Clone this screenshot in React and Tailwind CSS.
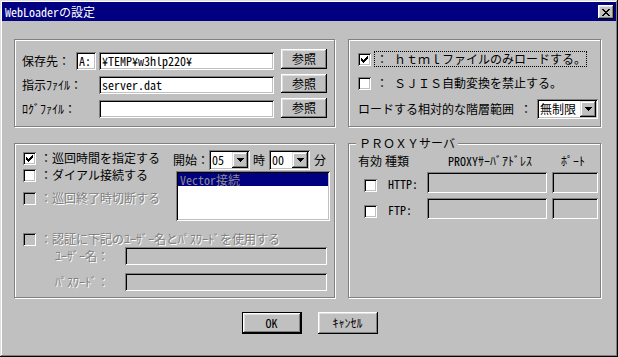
import React from "react";

function CheckMark() {
  return (
    <svg width="7" height="7" viewBox="0 0 7 7" shapeRendering="crispEdges" className="block">
      <path
        fill="#000"
        d="M6 0h1v1h-1z M5 1h2v1h-2z M0 2h1v1h-1z M4 2h3v1h-3z M0 3h2v1h-2z M3 3h3v1h-3z M0 4h5v1h-5z M1 5h3v1h-3z M2 6h1v1h-1z"
      />
    </svg>
  );
}

function Arrow() {
  return (
    <svg width="7" height="4" viewBox="0 0 7 4" shapeRendering="crispEdges" className="block">
      <path fill="#000" d="M0 0h7v1h-7z M1 1h5v1h-5z M2 2h3v1h-3z M3 3h1v1h-1z" />
    </svg>
  );
}

function Check({ checked, disabled, className = "" }) {
  return (
    <div
      className={`w-[13px] h-[13px] shrink-0 p-[3px] ${disabled ? "bg-[#c0c0c0]" : "bg-white"} shadow-[inset_1px_1px_0_#808080,inset_-1px_-1px_0_#ffffff,inset_2px_2px_0_#000000,inset_-2px_-2px_0_#c0c0c0] ${className}`}
    >
      {checked && <CheckMark />}
    </div>
  );
}

function Field({ className = "", disabled, children }) {
  return (
    <div
      className={`shrink-0 flex items-center pl-[3px] whitespace-nowrap overflow-hidden ${disabled ? "bg-[#c0c0c0]" : "bg-white"} shadow-[inset_1px_1px_0_#808080,inset_-1px_-1px_0_#ffffff,inset_2px_2px_0_#000000,inset_-2px_-2px_0_#c0c0c0] ${className}`}
    >
      {children}
    </div>
  );
}

function Btn({ className = "", children }) {
  return (
    <div
      className={`shrink-0 flex items-center justify-center bg-[#c0c0c0] shadow-[inset_-1px_-1px_0_#000000,inset_1px_1px_0_#ffffff,inset_-2px_-2px_0_#808080,inset_2px_2px_0_#dfdfdf] ${className}`}
    >
      {children}
    </div>
  );
}

function Combo({ className = "", children }) {
  return (
    <div
      className={`shrink-0 flex h-[20px] bg-white p-[2px] shadow-[inset_1px_1px_0_#808080,inset_-1px_-1px_0_#ffffff,inset_2px_2px_0_#000000,inset_-2px_-2px_0_#c0c0c0] ${className}`}
    >
      <div className="flex-1 flex items-center pl-[1px] whitespace-nowrap">{children}</div>
      <div className="w-[16px] h-[16px] flex items-center justify-center bg-[#c0c0c0] shadow-[inset_-1px_-1px_0_#000000,inset_1px_1px_0_#dfdfdf,inset_-2px_-2px_0_#808080,inset_2px_2px_0_#ffffff]">
        <Arrow />
      </div>
    </div>
  );
}

function Dis({ className = "", children }) {
  return <span className={`text-[#808080] [text-shadow:1px_1px_0_#ffffff] whitespace-nowrap ${className}`}>{children}</span>;
}

export default function App() {
  return (
    <div className="w-[618px] h-[357px] bg-[#c0c0c0] p-[2px] flex flex-col text-black text-[12px] leading-[12px] font-['Noto_Sans_Mono_CJK_JP','Noto_Sans_CJK_JP',monospace] shadow-[inset_-1px_-1px_0_#000000,inset_1px_1px_0_#dfdfdf,inset_-2px_-2px_0_#808080,inset_2px_2px_0_#ffffff]">
      {/* title bar */}
      <div className="h-[19px] bg-[#000080] flex items-center pl-[3px] pr-[2px]">
        <span className="text-white whitespace-nowrap">WebLoaderの設定</span>
        <div className="ml-auto w-[16px] h-[14px] mt-[1px] flex items-center justify-center bg-[#c0c0c0] shadow-[inset_-1px_-1px_0_#000000,inset_1px_1px_0_#ffffff,inset_-2px_-2px_0_#808080,inset_2px_2px_0_#dfdfdf]">
          <svg width="8" height="7" viewBox="0 0 8 7" shapeRendering="crispEdges" className="block">
            <path
              fill="#000"
              d="M0 0h2v1h-2z M6 0h2v1h-2z M1 1h2v1h-2z M5 1h2v1h-2z M2 2h4v1h-4z M3 3h2v1h-2z M2 4h4v1h-4z M1 5h2v1h-2z M5 5h2v1h-2z M0 6h2v1h-2z M6 6h2v1h-2z"
            />
          </svg>
        </div>
      </div>

      {/* body */}
      <div className="flex flex-col pl-[12px] pt-[18px]">
        {/* row 1 */}
        <div className="flex gap-[13px]">
          {/* group A */}
          <div className="w-[321px] h-[88px] border border-[#808080] shadow-[inset_1px_1px_0_#ffffff,1px_1px_0_#ffffff] pt-[10px] pl-[7px] flex flex-col gap-[4px]">
            <div className="flex items-end h-[20px]">
              <span className="w-[54px] leading-[18px] whitespace-nowrap">保存先：</span>
              <Field className="w-[20px] h-[18px] pl-[2px]">A:</Field>
              <Field className="ml-[3px] w-[175px] h-[18px]">¥TEMP¥w3hlp220¥</Field>
              <Btn className="ml-[7px] w-[46px] h-[20px] mb-[1px]">参照</Btn>
            </div>
            <div className="flex items-end h-[20px]">
              <span className="w-[77px] leading-[18px] whitespace-nowrap">指示ﾌｧｲﾙ：</span>
              <Field className="w-[175px] h-[18px]">server.dat</Field>
              <Btn className="ml-[7px] w-[46px] h-[19px] mb-[1px]">参照</Btn>
            </div>
            <div className="flex items-end h-[20px]">
              <span className="w-[77px] leading-[18px] whitespace-nowrap">ﾛｸﾞﾌｧｲﾙ：</span>
              <Field className="w-[175px] h-[18px]"></Field>
              <Btn className="ml-[7px] w-[46px] h-[20px]">参照</Btn>
            </div>
          </div>

          {/* group B */}
          <div className="w-[253px] h-[88px] border border-[#808080] shadow-[inset_1px_1px_0_#ffffff,1px_1px_0_#ffffff] pt-[11px] pl-[9px] flex flex-col">
            <div className="flex items-center h-[16px]">
              <Check checked />
              <div className="ml-[3px] w-[213px] h-[16px] border border-dotted border-black flex items-center pl-[1px] whitespace-pre">
                {"： ｈｔｍｌファイルのみロードする。"}
              </div>
            </div>
            <div className="flex items-center h-[16px] mt-[8px]">
              <Check />
              <span className="ml-[5px] whitespace-pre">{"： ＳＪＩＳ自動変換を禁止する。"}</span>
            </div>
            <div className="flex items-center h-[20px] mt-[8px]">
              <span className="w-[179px] whitespace-nowrap">ロードする相対的な階層範囲 ：</span>
              <Combo className="w-[61px]">無制限</Combo>
            </div>
          </div>
        </div>

        {/* row 2 */}
        <div className="flex gap-[13px] mt-[16px]">
          {/* group C */}
          <div className="w-[321px] h-[155px] border border-[#808080] shadow-[inset_1px_1px_0_#ffffff,1px_1px_0_#ffffff] pt-[6px] pl-[8px] flex flex-col">
            <div className="flex">
              <div className="w-[150px] flex flex-col">
                <div className="flex items-center h-[16px]">
                  <Check checked />
                  <span className="ml-[4px] whitespace-nowrap">：巡回時間を指定する</span>
                </div>
                <div className="flex items-center h-[16px] mt-[1px]">
                  <Check />
                  <span className="ml-[4px] whitespace-nowrap">：ダイアル接続する</span>
                </div>
                <div className="flex items-center h-[16px] mt-[7px]">
                  <Check disabled />
                  <Dis className="ml-[4px]">：巡回終了時切断する</Dis>
                </div>
              </div>
              <div className="flex flex-col">
                <div className="flex items-center h-[20px]">
                  <span className="w-[36px] whitespace-nowrap">開始：</span>
                  <Combo className="w-[41px]">05</Combo>
                  <span className="ml-[3px]">時</span>
                  <Combo className="ml-[4px] w-[41px]">00</Combo>
                  <span className="ml-[4px]">分</span>
                </div>
                <div className="ml-[3px] mt-[1px] w-[154px] h-[50px] bg-white p-[2px] shadow-[inset_1px_1px_0_#808080,inset_-1px_-1px_0_#ffffff,inset_2px_2px_0_#000000,inset_-2px_-2px_0_#c0c0c0]">
                  <div className="h-[13px] bg-[#000080] text-[#8c8c8c] pl-[2px] leading-[13px] whitespace-nowrap">Vector接続</div>
                </div>
              </div>
            </div>
            <div className="flex items-center h-[16px] mt-[10px]">
              <Check disabled />
              <Dis className="ml-[4px]">：認証に下記のﾕｰｻﾞｰ名とﾊﾟｽﾜｰﾄﾞを使用する</Dis>
            </div>
            <div className="flex items-center h-[18px] pl-[32px]">
              <Dis className="w-[70px]">ﾕｰｻﾞｰ名：</Dis>
              <Field disabled className="w-[202px] h-[18px]"></Field>
            </div>
            <div className="flex items-center h-[18px] pl-[32px] mt-[8px]">
              <Dis className="w-[70px]">ﾊﾟｽﾜｰﾄﾞ：</Dis>
              <Field disabled className="w-[202px] h-[18px]"></Field>
            </div>
          </div>

          {/* group D - PROXY */}
          <div className="relative w-[253px] h-[155px] border border-[#808080] shadow-[inset_1px_1px_0_#ffffff,1px_1px_0_#ffffff] pt-[11px] pl-[9px] flex flex-col">
            <span className="absolute left-[7px] top-[-7px] px-[3px] bg-[#c0c0c0] whitespace-nowrap">ＰＲＯＸＹサーバ</span>
            <div className="flex items-center h-[12px] whitespace-nowrap">
              <span className="w-[27px]">有効</span>
              <span className="w-[63px]">種類</span>
              <span className="w-[113px]">PROXYｻｰﾊﾞｱﾄﾞﾚｽ</span>
              <span>ﾎﾟｰﾄ</span>
            </div>
            <div className="flex items-end h-[21px] mt-[5px]">
              <Check className="ml-[6px] mb-[1px]" />
              <span className="ml-[11px] w-[39px] mb-[3px]">HTTP:</span>
              <Field disabled className="w-[120px] h-[21px]"></Field>
              <Field disabled className="ml-[5px] w-[46px] h-[21px]"></Field>
            </div>
            <div className="flex items-end h-[21px] mt-[5px]">
              <Check className="ml-[6px] mb-[1px]" />
              <span className="ml-[11px] w-[39px] mb-[3px]">FTP:</span>
              <Field disabled className="w-[120px] h-[21px]"></Field>
              <Field disabled className="ml-[5px] w-[46px] h-[21px]"></Field>
            </div>
          </div>
        </div>
      </div>

      {/* buttons */}
      <div className="flex justify-center gap-[16px] mt-[14px] pl-[1px]">
        <div className="w-[60px] h-[22px] border border-black flex">
          <Btn className="flex-1">OK</Btn>
        </div>
        <Btn className="w-[60px] h-[22px]">ｷｬﾝｾﾙ</Btn>
      </div>
    </div>
  );
}
